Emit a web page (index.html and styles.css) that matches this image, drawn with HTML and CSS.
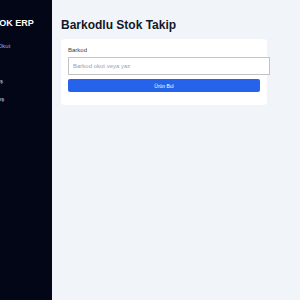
FILE: index.html
```html
<!DOCTYPE html>
<html lang="tr">
  <head>
    <meta charset="UTF-8" />
    <meta name="viewport" content="width=device-width, initial-scale=1.0" />
    <title>Barkodlu Stok Takip</title>
    <link rel="stylesheet" href="styles.css">
  </head>
  <body>
    <div class="layout">
      <aside class="sidebar">
        <div class="sidebar-inner">
          <div class="brand">STOK ERP</div>
          <nav class="menu">
            <a class="menu-item active" href="#">Barkod Okut</a>
            <a class="menu-item" href="#">Ürünler</a>
            <a class="menu-item" href="#">Stok Giriş</a>
            <a class="menu-item" href="#">Stok Çıkış</a>
          </nav>
        </div>
      </aside>

      <main class="main">
        <h1>Barkodlu Stok Takip</h1>

        <div class="card">
          <form id="barcodeForm">
            <label for="barcode">Barkod</label>
            <input type="text" id="barcode" placeholder="Barkod okut veya yaz" />
            <button type="submit" class="find-btn">Ürün Bul</button>
          </form>
        </div>
      </main>
    </div>
  </body>
</html>
```

FILE: styles.css
```css
* {
  margin: 0;
  padding: 0;
  box-sizing: border-box;
  font-family: "Liberation Sans", Arial, sans-serif;
}

body {
  background-color: #f1f5f9;
}

.layout {
  display: flex;
  min-height: 100vh;
}

/* sidebar is squeezed, content gets cut on the left */
.sidebar {
  flex: 0 0 52px;
  background-color: #020617;
  overflow: hidden;
  display: flex;
  justify-content: flex-end;
}

.sidebar-inner {
  flex: 0 0 75px;
  padding-top: 17px;
}

.brand {
  padding-left: 11px;
  color: white;
  font-size: 9px;
  font-weight: bold;
  line-height: 12px;
  white-space: nowrap;
}

.menu {
  margin-top: 9px;
  display: flex;
  flex-direction: column;
}

.menu-item {
  padding: 5px 0;
  color: #cbd5e1;
  font-size: 6px;
  line-height: 7.5px;
  text-decoration: none;
  white-space: nowrap;
}

.menu-item.active {
  color: #93a5f5;
}

.main {
  flex: 1;
  padding: 18px 9px;
}

h1 {
  color: #111827;
  font-size: 12px;
  font-weight: bold;
  line-height: 14px;
  margin-bottom: 7px;
}

.card {
  width: 206px;
  background-color: white;
  border-radius: 4px;
  padding: 7px 7px 13px;
}

.card label {
  display: block;
  color: #374151;
  font-size: 6px;
  line-height: 8px;
  margin-bottom: 3px;
}

.card input {
  box-sizing: content-box;
  display: block;
  width: 100%;
  height: 8px;
  padding: 4px;
  font-size: 6px;
  border: 1px solid #c4c4c4;
  outline: none;
}

.card input::placeholder {
  color: #9ca3af;
}

.find-btn {
  display: block;
  width: 100%;
  height: 13px;
  margin-top: 4px;
  background-color: #2563eb;
  color: white;
  border: none;
  border-radius: 2px;
  font-size: 5px;
}
```
